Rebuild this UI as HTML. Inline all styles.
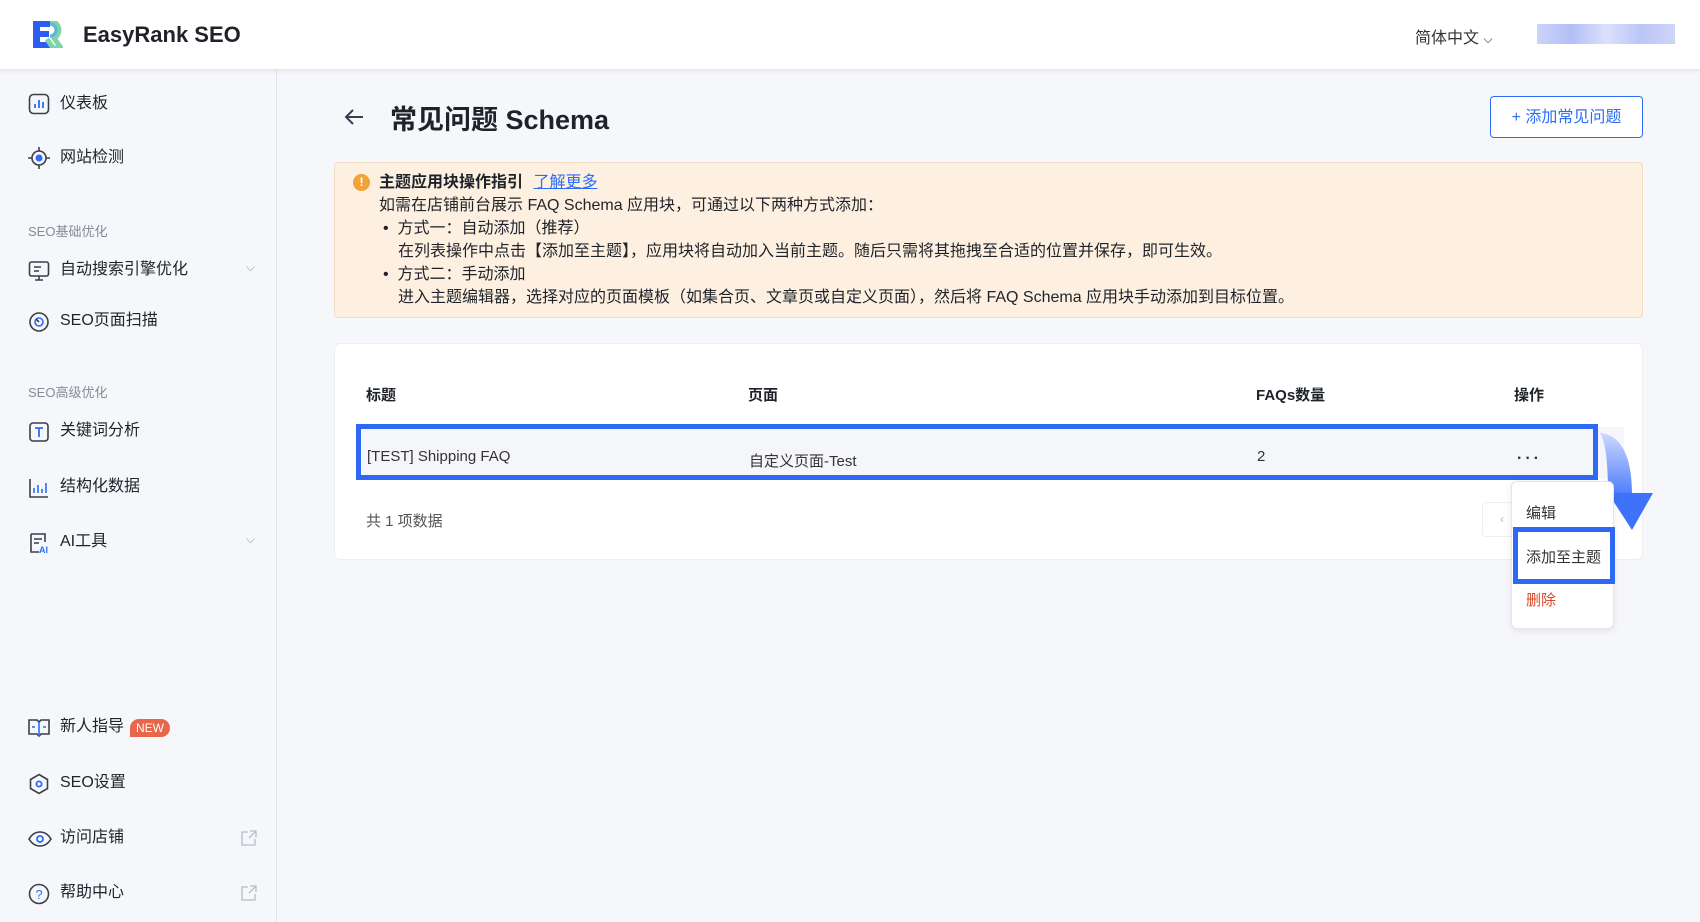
<!DOCTYPE html>
<html><head><meta charset="utf-8"><style>
*{margin:0;padding:0;box-sizing:border-box}
body{width:1700px;height:922px;overflow:hidden;background:#f6f7fb;font-family:"Liberation Sans","Noto Sans CJK SC",sans-serif;color:#1f2329;position:relative}
.a{position:absolute;white-space:nowrap}
.hdr{left:0;top:0;width:1700px;height:69px;background:#fff;box-shadow:0 2px 4px rgba(0,0,0,.08);z-index:2}
.side{left:0;top:69px;width:277px;height:853px;background:#f6f7fb;border-right:1px solid #e3e5ea}
.nav{left:60px;font-size:16px;color:#1f2329;line-height:20px}
.ic{left:28px}
.grp{left:28px;font-size:13px;color:#868b96}
.al{font-size:16px;line-height:23px;color:#1f2329}
</style></head><body>
<div class="a hdr">
  <svg class="a" style="left:33px;top:21px" width="30" height="27" viewBox="0 0 30 27"><path d="M0 0h17v6H7v4h9v6H7v5h10v6H0z" fill="#2d5cf0"/><path d="M17 0a9 9 0 0 1 4 17l7 10h-8l-6-9" fill="none" stroke="#7fd3a8" stroke-width="5"/><path d="M17 3a6 6 0 0 1 0 12" fill="none" stroke="#5ab7d6" stroke-width="3"/></svg>
  <div class="a" style="left:83px;top:22px;font-size:22px;font-weight:bold;color:#1f2329">EasyRank SEO</div>
  <div class="a" style="left:1415px;top:24px;font-size:16px;color:#333">简体中文 <span style="font-size:12px">⌵</span></div>
  <div class="a" style="left:1537px;top:24px;width:138px;height:20px;background:linear-gradient(90deg,#c6cff8,#aab8f5,#d7ddfb,#b4c0f6,#c8d0f8);opacity:.9"></div>
</div>
<div class="a side"></div>
<svg class="a ic" style="top:93px" width="22" height="22" viewBox="0 0 22 22"><rect x="1.5" y="1.5" width="19" height="19" rx="4" fill="none" stroke="#3a3f4b" stroke-width="1.6"/><path d="M7 15v-4M11 15V7M15 15v-6" stroke="#2d6cf6" stroke-width="1.8"/></svg>
<div class="a nav" style="top:94px">仪表板</div>
<svg class="a ic" style="top:147px" width="22" height="22" viewBox="0 0 22 22"><circle cx="11" cy="11" r="7" fill="none" stroke="#3a3f4b" stroke-width="1.6"/><circle cx="11" cy="11" r="3.5" fill="#2d6cf6"/><path d="M11 0v4M11 18v4M0 11h4M18 11h4" stroke="#3a3f4b" stroke-width="1.6"/></svg>
<div class="a nav" style="top:148px">网站检测</div>
<div class="a grp" style="top:221px">SEO基础优化</div>
<svg class="a ic" style="top:260px" width="22" height="22" viewBox="0 0 22 22"><rect x="1.5" y="2" width="19" height="14" rx="2" fill="none" stroke="#3a3f4b" stroke-width="1.6"/><path d="M6 7h7M6 11h5M7 20h8M11 16v4" stroke="#3a3f4b" stroke-width="1.6"/></svg>
<div class="a nav" style="top:260px">自动搜索引擎优化</div>
<div class="a" style="left:246px;top:260px;font-size:12px;color:#9aa0ab">⌵</div>
<svg class="a ic" style="top:311px" width="22" height="22" viewBox="0 0 22 22"><circle cx="11" cy="11" r="9" fill="none" stroke="#3a3f4b" stroke-width="1.6"/><circle cx="11" cy="11" r="4" fill="none" stroke="#2d6cf6" stroke-width="1.6"/><path d="M8 8l3 3" stroke="#3a3f4b" stroke-width="1.6"/></svg>
<div class="a nav" style="top:311px">SEO页面扫描</div>
<div class="a grp" style="top:382px">SEO高级优化</div>
<svg class="a ic" style="top:421px" width="22" height="22" viewBox="0 0 22 22"><rect x="2" y="2" width="18" height="18" rx="3" fill="none" stroke="#3a3f4b" stroke-width="1.6"/><path d="M7 7h8M11 7v9" stroke="#2d6cf6" stroke-width="1.8"/></svg>
<div class="a nav" style="top:421px">关键词分析</div>
<svg class="a ic" style="top:477px" width="22" height="22" viewBox="0 0 22 22"><path d="M2 2v18h18" fill="none" stroke="#3a3f4b" stroke-width="1.6"/><path d="M6 16v-5M10 16V8M14 16v-4M18 16V6" stroke="#2d6cf6" stroke-width="1.6"/></svg>
<div class="a nav" style="top:477px">结构化数据</div>
<svg class="a ic" style="top:532px" width="22" height="22" viewBox="0 0 22 22"><path d="M3 2h14v8M3 2v18h8" fill="none" stroke="#3a3f4b" stroke-width="1.6"/><path d="M6 7h8M6 11h5" stroke="#3a3f4b" stroke-width="1.6"/><text x="11" y="21" font-size="9" font-weight="bold" fill="#2d6cf6" font-family="Liberation Sans">AI</text></svg>
<div class="a nav" style="top:532px">AI工具</div>
<div class="a" style="left:246px;top:532px;font-size:12px;color:#9aa0ab">⌵</div>
<svg class="a ic" style="top:717px" width="22" height="22" viewBox="0 0 22 22"><path d="M1 3h8l2 2 2-2h8v14h-8l-2 2-2-2H1z" fill="none" stroke="#3a3f4b" stroke-width="1.6"/><path d="M11 5v14M4 10h3M15 10h3" stroke="#2d6cf6" stroke-width="1.6"/></svg>
<div class="a nav" style="top:717px">新人指导</div>
<div class="a" style="left:130px;top:719px;width:40px;height:18px;background:#e8664a;border-radius:9px 9px 9px 0;color:#fff;font-size:12px;line-height:18px;text-align:center">NEW</div>
<svg class="a ic" style="top:773px" width="22" height="22" viewBox="0 0 22 22"><path d="M11 1.5l8.5 5v9l-8.5 5-8.5-5v-9z" fill="none" stroke="#3a3f4b" stroke-width="1.6"/><circle cx="11" cy="11" r="2.6" fill="none" stroke="#2d6cf6" stroke-width="1.8"/></svg>
<div class="a nav" style="top:773px">SEO设置</div>
<svg class="a ic" style="top:828px" width="24" height="22" viewBox="0 0 24 22"><path d="M1 11c3-5 7-7 11-7s8 2 11 7c-3 5-7 7-11 7s-8-2-11-7z" fill="none" stroke="#3a3f4b" stroke-width="1.6"/><circle cx="12" cy="11" r="3" fill="none" stroke="#2d6cf6" stroke-width="1.8"/></svg>
<div class="a nav" style="top:828px">访问店铺</div>
<svg class="a" style="left:241px;top:830px" width="16" height="16" viewBox="0 0 16 16"><path d="M7 2H1v13h13V9M9 1h6v6M15 1L8 8" fill="none" stroke="#b8bcc5" stroke-width="1.3"/></svg>
<svg class="a ic" style="top:883px" width="22" height="22" viewBox="0 0 22 22"><circle cx="11" cy="11" r="9.5" fill="none" stroke="#3a3f4b" stroke-width="1.6"/><text x="11" y="16" text-anchor="middle" font-size="13" fill="#2d6cf6" font-family="Liberation Sans">?</text></svg>
<div class="a nav" style="top:883px">帮助中心</div>
<svg class="a" style="left:241px;top:885px" width="16" height="16" viewBox="0 0 16 16"><path d="M7 2H1v13h13V9M9 1h6v6M15 1L8 8" fill="none" stroke="#b8bcc5" stroke-width="1.3"/></svg>

<svg class="a" style="left:344px;top:108px" width="20" height="18" viewBox="0 0 20 18"><path d="M19 9H2M9 2L2 9l7 7" fill="none" stroke="#3a3f4b" stroke-width="2"/></svg>
<div class="a" style="left:390px;top:98px;font-size:27px;font-weight:bold;color:#1f2329">常见问题 Schema</div>
<div class="a" style="left:1490px;top:96px;width:153px;height:42px;border:1.5px solid #2d6cf6;border-radius:4px;background:#fff;color:#2d6cf6;font-size:16px;line-height:42px;text-align:center">+ 添加常见问题</div>

<div class="a" style="left:334px;top:162px;width:1309px;height:156px;background:#fdf0e1;border:1px solid #f5dcc0;border-radius:4px"></div>
<div class="a" style="left:353px;top:174px;width:17px;height:17px;border-radius:50%;background:#f0a23b;color:#fff;font-size:12px;font-weight:bold;text-align:center;line-height:17px">!</div>
<div class="a al" style="left:379px;top:171px;font-weight:bold">主题应用块操作指引 <span style="color:#2d6cf6;font-weight:normal;text-decoration:underline;margin-left:6px">了解更多</span></div>
<div class="a al" style="left:379px;top:194px">如需在店铺前台展示 FAQ Schema 应用块，可通过以下两种方式添加：</div>
<div class="a al" style="left:383px;top:217px">•&nbsp; 方式一：自动添加（推荐）</div>
<div class="a al" style="left:398px;top:240px">在列表操作中点击【添加至主题】，应用块将自动加入当前主题。随后只需将其拖拽至合适的位置并保存，即可生效。</div>
<div class="a al" style="left:383px;top:263px">•&nbsp; 方式二：手动添加</div>
<div class="a al" style="left:398px;top:286px">进入主题编辑器，选择对应的页面模板（如集合页、文章页或自定义页面），然后将 FAQ Schema 应用块手动添加到目标位置。</div>

<div class="a" style="left:334px;top:343px;width:1309px;height:217px;background:#fff;border:1px solid #eceef2;border-radius:6px"></div>
<div class="a" style="left:366px;top:384px;font-size:15px;font-weight:bold">标题</div>
<div class="a" style="left:748px;top:384px;font-size:15px;font-weight:bold">页面</div>
<div class="a" style="left:1256px;top:384px;font-size:15px;font-weight:bold">FAQs数量</div>
<div class="a" style="left:1514px;top:384px;font-size:15px;font-weight:bold">操作</div>
<div class="a" style="left:358px;top:427px;width:1266px;height:51px;background:#f5f6fa"></div>
<div class="a" style="left:356px;top:424px;width:1242px;height:56px;border:5px solid #2f68f4"></div>
<div class="a" style="left:367px;top:448px;font-size:15px;color:#333">[TEST] Shipping FAQ</div>
<div class="a" style="left:749px;top:450px;font-size:15px;color:#333">自定义页面-Test</div>
<div class="a" style="left:1257px;top:448px;font-size:15px;color:#333">2</div>
<div class="a" style="left:1517px;top:450px;font-size:16px;color:#333;letter-spacing:3px;font-weight:bold">···</div>
<div class="a" style="left:366px;top:510px;font-size:15px;color:#555">共 1 项数据</div>
<div class="a" style="left:1482px;top:502px;width:40px;height:35px;border:1px solid #eceef2;border-radius:4px;color:#bbb;font-size:12px;text-align:center;line-height:33px">‹</div>

<svg class="a" style="left:1598px;top:430px" width="60" height="104" viewBox="0 0 60 104"><defs><linearGradient id="g" x1="0" y1="0" x2="0" y2="1"><stop offset="0" stop-color="#c8d6ff"/><stop offset="1" stop-color="#3f72fb"/></linearGradient></defs><path d="M2 3C25 5 34 30 34 63h-24c0-28-2-50-8-60z" fill="url(#g)" opacity=".9"/><path d="M10 63h45L34 100z" fill="#3f72fb"/></svg>

<div class="a" style="left:1511px;top:481px;width:103px;height:148px;background:#fff;border:1px solid #e3e5ea;border-radius:6px;box-shadow:0 2px 8px rgba(0,0,0,.08)"></div>
<div class="a" style="left:1526px;top:502px;font-size:15px;color:#333">编辑</div>
<div class="a" style="left:1513px;top:527px;width:102px;height:57px;border:5px solid #2f68f4"></div>
<div class="a" style="left:1526px;top:546px;font-size:15px;color:#333">添加至主题</div>
<div class="a" style="left:1526px;top:589px;font-size:15px;color:#d9472b">删除</div>
</body></html>
